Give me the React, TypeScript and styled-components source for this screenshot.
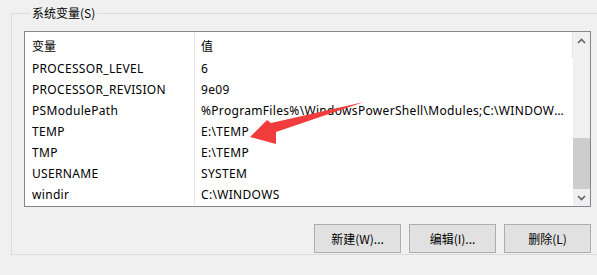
import styled, { createGlobalStyle } from 'styled-components';

const GlobalStyle = createGlobalStyle`
  html, body {
    margin: 0;
    padding: 0;
    background: #f0f0f0;
    overflow: hidden;
  }
  body {
    font-family: "Noto Sans", "Noto Sans CJK SC", sans-serif;
    font-size: 12px;
    color: #000;
  }
`;

const Page = styled.div`
  position: relative;
  width: 597px;
  height: 275px;
  overflow: hidden;
`;

const Group = styled.fieldset`
  margin: 5px 0 0 11px;
  padding: 0 0 0 12px;
  width: 620px;
  height: 250px;
  box-sizing: border-box;
  border: 1px solid #dcdcdc;
  min-width: 0;
`;

const Legend = styled.legend`
  margin-left: 6px;
  padding: 0 2px;
  line-height: 16px;
  font-family: "Noto Sans CJK SC", sans-serif;
`;

const ListBox = styled.div`
  position: relative;
  margin-top: 10px;
  width: 567px;
  height: 176px;
  box-sizing: border-box;
  border: 1px solid #828790;
  background: #fff;
  display: flex;
  overflow: hidden;
`;

const Table = styled.div`
  flex: 1;
  min-width: 0;
  display: flex;
  flex-direction: column;
`;

const Row = styled.div<{ $header?: boolean }>`
  display: grid;
  grid-template-columns: 169px 1fr;
  height: ${(p) => (p.$header ? 26 : 21)}px;
  flex: none;
  align-items: center;
  ${(p) => p.$header && 'border-right: 1px solid #e5e5e5;'}
`;

const Cell = styled.div<{ $header?: boolean }>`
  height: 100%;
  display: flex;
  align-items: center;
  padding: 0 ${(p) => (p.$header ? 6 : 8)}px 0 7px;
  white-space: nowrap;
  overflow: hidden;
  min-width: 0;
  letter-spacing: 0.32px;
  ${(p) => p.$header && 'font-family: "Noto Sans CJK SC", sans-serif; letter-spacing: 0;'}
  & + & {
    padding-left: 6px;
    ${(p) => p.$header && 'border-left: 1px solid #e5e5e5;'}
  }
`;

const CellText = styled.span`
  overflow: hidden;
  text-overflow: ellipsis;
  white-space: nowrap;
`;

const Scrollbar = styled.div`
  width: 17px;
  flex: none;
  background: #f0f0f0;
  display: flex;
  flex-direction: column;
`;

const ScrollButton = styled.div`
  height: 17px;
  flex: none;
  display: flex;
  align-items: center;
  justify-content: center;
`;

const Track = styled.div`
  flex: 1;
  display: flex;
  flex-direction: column;
  justify-content: flex-end;
`;

const Thumb = styled.div`
  height: 51px;
  background: #cdcdcd;
`;

const Buttons = styled.div`
  display: flex;
  gap: 8px;
  width: 567px;
  justify-content: flex-end;
  margin-top: 17px;
`;

const Button = styled.button`
  width: 87px;
  height: 29px;
  box-sizing: border-box;
  background: #e1e1e1;
  border: 1px solid #adadad;
  font-family: "Noto Sans CJK SC", sans-serif;
  font-size: 12px;
  color: #000;
  padding: 0;
  cursor: default;
`;

const Arrow = styled.svg`
  position: absolute;
  left: 0;
  top: 0;
  pointer-events: none;
`;

const rows: [string, string][] = [
  ['PROCESSOR_LEVEL', '6'],
  ['PROCESSOR_REVISION', '9e09'],
  ['PSModulePath', '%ProgramFiles%\\WindowsPowerShell\\Modules;C:\\WINDOWS\\system32\\WindowsPowerShell\\v1.0\\Modules'],
  ['TEMP', 'E:\\TEMP'],
  ['TMP', 'E:\\TEMP'],
  ['USERNAME', 'SYSTEM'],
  ['windir', 'C:\\WINDOWS'],
];

function Chevron({ up }: { up?: boolean }) {
  return (
    <svg width="9" height="6" viewBox="0 0 9 6">
      <path
        d={up ? 'M1 5 L4.5 1.5 L8 5' : 'M1 1 L4.5 4.5 L8 1'}
        fill="none"
        stroke="#606060"
        strokeWidth="1.6"
      />
    </svg>
  );
}

export default function App() {
  return (
    <Page>
      <GlobalStyle />
      <Group>
        <Legend>系统变量(S)</Legend>
        <ListBox>
          <Table>
            <Row $header>
              <Cell $header>变量</Cell>
              <Cell $header>值</Cell>
            </Row>
            {rows.map(([name, value]) => (
              <Row key={name}>
                <Cell>{name}</Cell>
                <Cell>
                  <CellText>{value}</CellText>
                </Cell>
              </Row>
            ))}
          </Table>
          <Scrollbar>
            <ScrollButton>
              <Chevron up />
            </ScrollButton>
            <Track>
              <Thumb />
            </Track>
            <ScrollButton>
              <Chevron />
            </ScrollButton>
          </Scrollbar>
        </ListBox>
        <Buttons>
          <Button>新建(W)...</Button>
          <Button>编辑(I)...</Button>
          <Button>删除(L)</Button>
        </Buttons>
      </Group>
      <Arrow width="597" height="275" viewBox="0 0 597 275">
        <polygon
          points="250,137 267,120 271,123 364,102 276,132 276,144"
          fill="#f03c3c"
        />
      </Arrow>
    </Page>
  );
}
